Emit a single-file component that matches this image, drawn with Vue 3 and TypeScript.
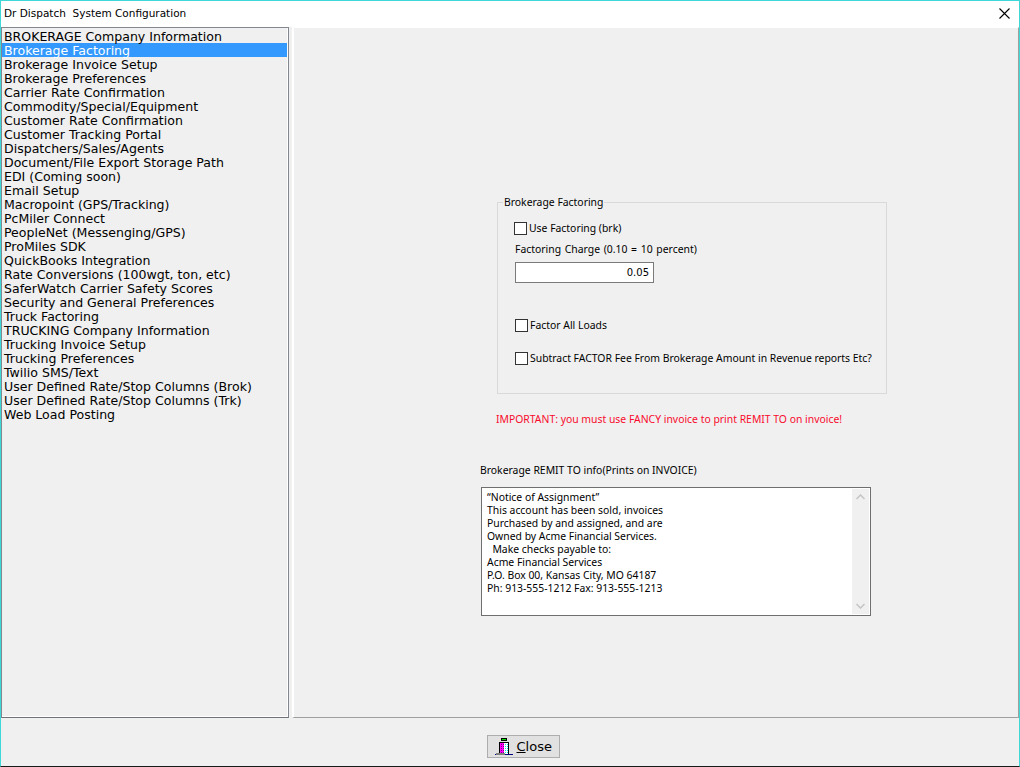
<script setup lang="ts">
const items: string[] = [
  'BROKERAGE Company Information',
  'Brokerage Factoring',
  'Brokerage Invoice Setup',
  'Brokerage Preferences',
  'Carrier Rate Confirmation',
  'Commodity/Special/Equipment',
  'Customer Rate Confirmation',
  'Customer Tracking Portal',
  'Dispatchers/Sales/Agents',
  'Document/File Export Storage Path',
  'EDI (Coming soon)',
  'Email Setup',
  'Macropoint (GPS/Tracking)',
  'PcMiler Connect',
  'PeopleNet (Messenging/GPS)',
  'ProMiles SDK',
  'QuickBooks Integration',
  'Rate Conversions (100wgt, ton, etc)',
  'SaferWatch Carrier Safety Scores',
  'Security and General Preferences',
  'Truck Factoring',
  'TRUCKING Company Information',
  'Trucking Invoice Setup',
  'Trucking Preferences',
  'Twilio SMS/Text',
  'User Defined Rate/Stop Columns (Brok)',
  'User Defined Rate/Stop Columns (Trk)',
  'Web Load Posting',
]
const remit: string[] = [
  '“Notice of Assignment”',
  'This account has been sold, invoices',
  'Purchased by and assigned, and are',
  'Owned by Acme Financial Services.',
  '  Make checks payable to:',
  'Acme Financial Services',
  'P.O. Box 00, Kansas City, MO 64187',
  'Ph: 913-555-1212 Fax: 913-555-1213',
]
</script>

<template>
  <div class="window">
    <header class="titlebar">
      <span class="title">Dr Dispatch&nbsp; System Configuration</span>
      <svg class="x" width="11" height="11" viewBox="0 0 11 11">
        <path d="M0.5 0.5L10.5 10.5M10.5 0.5L0.5 10.5" stroke="#000" stroke-width="1.1" fill="none" />
      </svg>
    </header>
    <main class="body">
      <ul class="list">
        <li v-for="(it, i) in items" :key="it" :class="{ sel: i === 1 }">{{ it }}</li>
      </ul>
      <section class="panel">
        <fieldset class="group">
          <legend>Brokerage Factoring</legend>
          <label class="check first"><span class="box"></span>Use Factoring (brk)</label>
          <div class="charge-label">Factoring Charge (0.10 = 10 percent)</div>
          <div class="input">0.05</div>
          <label class="check second"><span class="box"></span>Factor All Loads</label>
          <label class="check third"><span class="box"></span>Subtract FACTOR Fee From Brokerage Amount in Revenue reports Etc?</label>
        </fieldset>
        <p class="warn">IMPORTANT: you must use FANCY invoice to print REMIT TO on invoice!</p>
        <div class="remit-label">Brokerage REMIT TO info(Prints on INVOICE)</div>
        <div class="memo">
          <div class="memo-text">
            <div v-for="l in remit" :key="l" class="memo-line">{{ l }}</div>
          </div>
          <div class="scroll">
            <svg width="9" height="6" viewBox="0 0 9 6"><path d="M0.5 5L4.5 1L8.5 5" stroke="#c4c4c4" stroke-width="1.5" fill="none" /></svg>
            <svg width="9" height="6" viewBox="0 0 9 6"><path d="M0.5 1L4.5 5L8.5 1" stroke="#c4c4c4" stroke-width="1.5" fill="none" /></svg>
          </div>
        </div>
      </section>
    </main>
    <footer class="footer">
      <button class="close" type="button">
        <svg width="18" height="18" viewBox="0 0 18 18" shape-rendering="crispEdges">
          <defs>
            <pattern id="dith-m" width="2" height="2" patternUnits="userSpaceOnUse">
              <rect width="2" height="2" fill="#ff00ff" />
              <rect width="1" height="1" fill="#800080" />
            </pattern>
            <pattern id="dith-c" width="2" height="2" patternUnits="userSpaceOnUse">
              <rect width="2" height="2" fill="#ffffff" />
              <rect width="1" height="1" fill="#00e0e0" />
            </pattern>
          </defs>
          <rect x="6" y="0" width="6" height="3" fill="#000" />
          <rect x="7" y="1" width="4" height="1" fill="#00e000" />
          <rect x="4" y="4" width="10" height="12" fill="#000" />
          <rect x="5" y="5" width="4" height="11" fill="url(#dith-m)" />
          <rect x="9" y="5" width="4" height="11" fill="url(#dith-c)" />
          <rect x="0" y="16" width="18" height="1" fill="#000080" />
          <rect x="1" y="15" width="9" height="2" fill="#808080" />
        </svg>
        <span><u>C</u>lose</span>
      </button>
    </footer>
  </div>
</template>

<style>
html, body { margin: 0; padding: 0; background: #f0f0f0; }
</style>

<style scoped>
.window {
  width: 1020px;
  height: 767px;
  box-sizing: border-box;
  display: flex;
  flex-direction: column;
  background: #f0f0f0;
  border: 1px solid #3fd8d8;
  border-bottom: 1px solid #1a1a1a;
  font-family: "Noto Sans", "Open Sans", sans-serif;
  color: #000;
  overflow: hidden;
}
.titlebar {
  height: 26px;
  box-sizing: border-box;
  background: #fff;
  display: flex;
  align-items: center;
  justify-content: space-between;
  padding: 0 9px 2px 3px;
  font-family: "DejaVu Sans", sans-serif;
  font-size: 10.5px;
  flex: none;
}
.body {
  flex: none;
  height: 692px;
  display: flex;
  gap: 3px;
}
.list {
  width: 288px;
  height: 691px;
  margin: 0;
  padding: 1px 1px 1px 0;
  box-sizing: border-box;
  list-style: none;
  border: 1px solid #828790;
  border-bottom-color: #6f7278;
  box-shadow: inset -1px -1px 0 #fff;
  font-family: "DejaVu Sans", sans-serif;
  font-size: 12.55px;
  flex: none;
}
.list li {
  height: 14px;
  line-height: 16px;
  padding-left: 2px;
  white-space: nowrap;
}
.list li.sel { background: #3399ff; color: #fff; }
.panel {
  flex: 1;
  border-top: 1px solid #fff;
  border-left: 2px solid #fff;
  border-right: 1px solid #a0a0a0;
  border-bottom: 1px solid #a0a0a0;
  height: 691px;
  box-sizing: border-box;
  display: flex;
  flex-direction: column;
  padding: 169px 0 0 186px;
  font-size: 10.4px;
}
.group {
  width: 390px;
  height: 197px;
  margin: 0 0 0 17px;
  padding: 0;
  box-sizing: border-box;
  border: 1px solid #d9d9d9;
  display: flex;
  flex-direction: column;
  align-items: flex-start;
  flex: none;
}
.group legend {
  padding: 0 1px;
  margin-left: 5px;
  line-height: 11px;
}
.check { display: flex; align-items: center; gap: 2px; line-height: 13px; white-space: nowrap; }
.check.first { margin: 14px 0 0 16px; }
.check.second { margin: 36px 0 0 17px; }
.check.third { margin: 20px 0 0 17px; }
.box {
  width: 11px;
  height: 11px;
  border: 1px solid #333;
  background: #fff;
  flex: none;
}
.charge-label { margin: 8px 0 0 17px; line-height: 13px; word-spacing: 1px; }
.input {
  margin: 6px 0 0 17px;
  width: 139px;
  height: 21px;
  box-sizing: border-box;
  border: 1px solid #7a7a7a;
  background: #fff;
  text-align: right;
  padding-right: 4px;
  line-height: 19px;
  font-family: "DejaVu Sans", sans-serif;
  font-size: 10px;
}
.warn {
  margin: 18px 0 0 16px;
  color: #f80a2c;
  line-height: 14px;
}
.remit-label { margin: 38px 0 0 0; line-height: 13px; }
.memo {
  margin: 10px 0 0 1px;
  width: 390px;
  height: 129px;
  box-sizing: border-box;
  border: 1px solid #6f6f6f;
  background: #fff;
  display: flex;
  flex: none;
}
.memo-text { flex: 1; padding: 3px 0 0 5px; line-height: 13px; }
.memo-line { white-space: pre; }
.scroll {
  width: 17px;
  margin: 1px;
  background: #f0f0f0;
  display: flex;
  flex-direction: column;
  align-items: center;
  justify-content: space-between;
  padding: 5px 0;
}
.footer {
  flex: 1;
  display: flex;
  justify-content: center;
  align-items: flex-start;
  padding: 16px 0 0 26px;
}
.close {
  width: 73px;
  height: 23px;
  box-sizing: border-box;
  background: #e1e1e1;
  border: 1px solid #adadad;
  padding: 0 0 0 7px;
  display: flex;
  align-items: center;
  gap: 4px;
  font-family: "DejaVu Sans", sans-serif;
  font-size: 13px;
  color: #000;
}
</style>
